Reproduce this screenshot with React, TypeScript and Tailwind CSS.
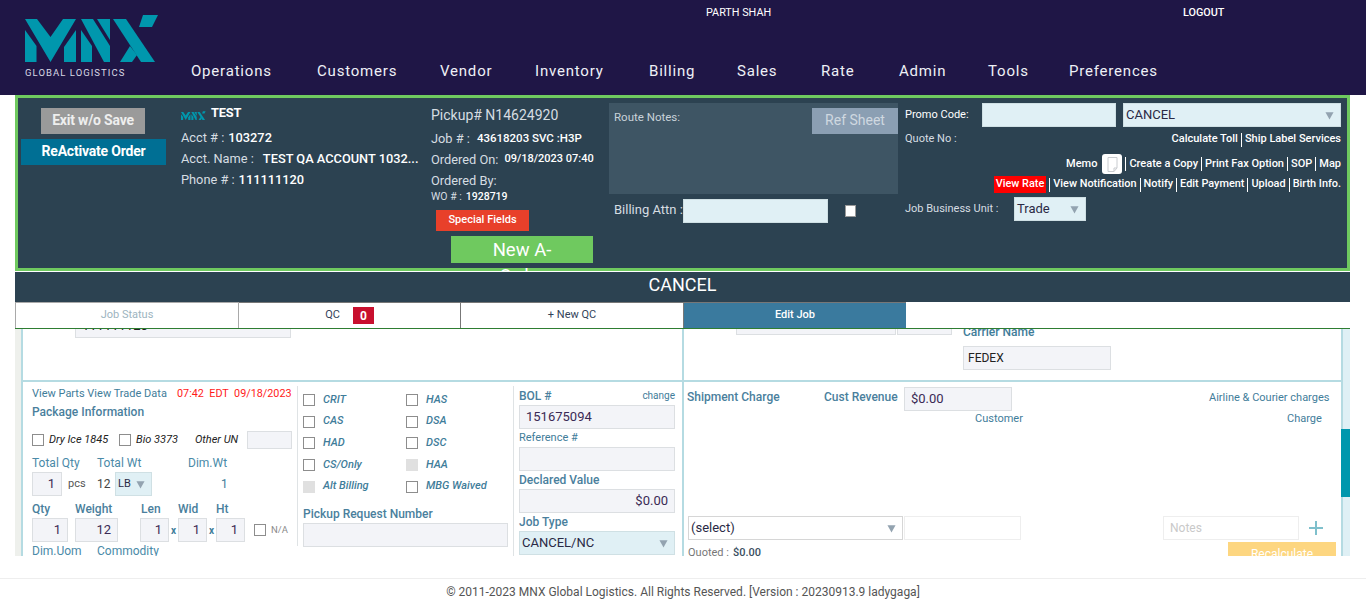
const navItems = [
  { label: "Operations", w: "w-[126px]" },
  { label: "Customers", w: "w-[123px]" },
  { label: "Vendor", w: "w-[95px]" },
  { label: "Inventory", w: "w-[114px]" },
  { label: "Billing", w: "w-[88px]" },
  { label: "Sales", w: "w-[84px]" },
  { label: "Rate", w: "w-[78px]" },
  { label: "Admin", w: "w-[89px]" },
  { label: "Tools", w: "w-[81px]" },
  { label: "Preferences", w: "" },
];

function Caret() {
  return (
    <svg width="9" height="9" viewBox="0 0 10 10" className="shrink-0">
      <path d="M0.5 1.5h9L5 9.5z" fill="#93a3b0" />
    </svg>
  );
}

function Logo({ width, height }: { width: number; height: number }) {
  return (
    <svg width={width} height={height} viewBox="25 15 135 50" className="block">
      <g fill="#0097ad">
        <path d="M25 30l11.5 16v16H25z" />
        <path d="M25 19h12l13.5 18L63 19h13L50.500 62z" />
        <path d="M76 30v32H64V47z" />
        <path d="M81 30l11 16v16H81z" />
        <path d="M81 19h12l17 27v16h-6z" />
        <path d="M97 19h13v21z" />
        <path d="M113 19h13l29 43h-14z" />
        <path d="M120 62l10-16 7 9-5 7z" />
        <path d="M143 15h15l-6 12h-13z" />
      </g>
    </svg>
  );
}

function Box({ className = "", children }: { className?: string; children?: React.ReactNode }) {
  return (
    <div className={`flex h-6 items-center border border-[#dcdfe2] bg-[#f3f4f8] px-1.5 text-[13px] font-normal text-[#3a2a55] ${className}`}>
      {children}
    </div>
  );
}

function Sel({ className = "", text }: { className?: string; text: string }) {
  return (
    <div className={`flex h-6 items-center justify-between border border-[#cfe0e4] bg-[#e0f0f5] pl-0.5 pr-1.5 text-[13px] text-[#2a2a45] ${className}`}>
      <span>{text}</span>
      <Caret />
    </div>
  );
}

function Check({ off = false }: { off?: boolean }) {
  return <div className={`h-3 w-3 shrink-0 ${off ? "bg-[#e0e0e0]" : "border border-[#8d8d8d] bg-white"}`} />;
}

function Flag({ label, off }: { label: string; off?: boolean }) {
  return (
    <div className="flex h-[21.7px] items-center gap-2">
      <Check off={off} />
      <span className="text-[11px] font-medium italic text-[#3f7d9a]">{label}</span>
    </div>
  );
}

function Pipe() {
  return <span className="mx-[3px] h-[14px] w-px bg-white" />;
}

export default function App() {
  return (
    <div className="h-[606px] w-[1366px] overflow-hidden bg-white [font-family:Roboto,sans-serif]">
      <header className="h-[95px] bg-[#1f1646] text-white">
        <div className="flex h-[26px] items-center text-[10.8px]">
          <span className="ml-[706px] w-[477px]">PARTH SHAH</span>
          <span className="font-medium">LOGOUT</span>
        </div>
        <div className="flex">
          <div className="ml-[25px] mt-[-11px] w-[166px]">
            <Logo width={135} height={50} />
            <div className="mt-px text-[9.5px] tracking-[1.05px] text-[#d8d8e4]">GLOBAL LOGISTICS</div>
          </div>
          <nav className="mt-[34px] flex text-[15px] tracking-[0.8px] text-[#eef0f6]">
            {navItems.map((item) => (
              <span key={item.label} className={item.w}>{item.label}</span>
            ))}
          </nav>
        </div>
      </header>

      <div className="mx-[15px] w-[1335px]">
        <section className="flex h-[176px] border-[3px] border-[#6fc95f] bg-[#2c4251] text-white">
          <div className="w-[163px] pt-[10px]">
            <div className="ml-[23px] flex h-[26px] w-[104px] items-center justify-center bg-[#9a9a9a] pb-px text-[14px] font-bold tracking-[-0.2px] text-[#eeeeee]">Exit w/o Save</div>
            <div className="ml-[3px] mt-[5px] flex h-[26px] w-[145px] items-center justify-center bg-[#006f94] pb-px text-[14px] font-bold tracking-[-0.2px]">ReActivate Order</div>
          </div>

          <div className="w-[250px] pt-[3px] text-[12.8px]">
            <div className="flex h-6 items-center">
              <div className="mt-[5px] w-[30px]"><Logo width={25} height={10} /></div>
              <span className="text-[12.8px] font-bold tracking-[-0.2px]">TEST</span>
            </div>
            <div className="mt-[2px] flex h-[21px] items-center gap-1 text-[#d6dde2]">Acct # : <b className="font-medium text-white">103272</b></div>
            <div className="flex h-[21px] items-center text-[#d6dde2]">Acct. Name :<b className="ml-[9px] whitespace-nowrap font-medium text-white">TEST QA ACCOUNT 1032...</b></div>
            <div className="flex h-[21px] items-center gap-1 text-[#d6dde2]">Phone # : <b className="font-medium text-white">111111120</b></div>
          </div>

          <div className="w-[178px] pt-[7px] text-[12.8px] text-[#d6dde2]">
            <div className="flex h-5 items-center text-[14px]">Pickup# N14624920</div>
            <div className="mt-[3px] flex h-[21px] items-center">Job # :<b className="ml-[7px] text-[11.5px] font-medium text-white">43618203 SVC :H3P</b></div>
            <div className="flex h-[21px] items-center">Ordered On:<b className="ml-[6px] text-[11px] font-medium text-white">09/18/2023 07:40</b></div>
            <div className="flex h-[21px] items-center">Ordered By:</div>
            <div className="-mt-px flex h-[14px] items-center text-[10.5px]">WO # :<b className="ml-1 font-medium text-white">1928719</b></div>
            <div className="ml-[5px] mt-[6px] flex h-[21px] w-[93px] items-center justify-center bg-[#e8402a] text-[11px] font-medium text-white">Special Fields</div>
            <div className="relative ml-[20px] mt-[5px] h-[27px] w-[142px] bg-[#6fc95f] pt-px text-center text-[18.500px] leading-[26px] text-white">New A-<br />Order</div>
          </div>

          <div className="w-[296px] pt-[5px]">
            <div className="flex h-[91px] w-[289px] items-start justify-between bg-[#3e5564]">
              <span className="ml-[5px] mt-[6px] text-[11.5px] text-[#c8d2d9]">Route Notes:</span>
              <span className="mt-[5px] flex h-[26px] w-[86px] items-center justify-center bg-[#8b9fb3] pb-px text-[14px] text-[#cfd8e0]">Ref Sheet</span>
            </div>
            <div className="mt-[5px] flex h-6 items-center">
              <span className="ml-[5px] w-[69px] pb-[2px] text-[13px] text-[#d6dde2]">Billing Attn :</span>
              <div className="h-6 w-[145px] border border-[#cfe0e4] bg-[#e0f0f5]" />
              <div className="ml-[17px] h-3 w-[11px] border border-[#999] bg-white" />
            </div>
          </div>

          <div className="w-[436px] pt-[5px] text-[11px]">
            <div className="flex h-6 items-center">
              <span className="w-[77px]">Promo Code:</span>
              <div className="h-6 w-[134px] border border-[#cfe0e4] bg-[#e0f0f5]" />
              <Sel className="ml-[7px] w-[218px] text-[12.5px]" text="CANCEL" />
            </div>
            <div className="mt-1 flex h-4 items-center justify-between">
              <span className="text-[#d6dde2]">Quote No :</span>
              <span className="flex items-center pt-px font-medium"><span>Calculate Toll</span><Pipe /><span>Ship Label Services</span></span>
            </div>
            <div className="mt-[7px] flex h-5 items-center justify-end font-medium">
              <span>Memo</span>
              <div className="ml-[5px] flex h-5 w-5 items-center justify-center rounded-[3px] bg-white">
                <svg width="11" height="15" viewBox="0 0 11 15"><path d="M1 .5h9v10.500L7 14.500H1zM7 14.500V11h3" fill="#fff" stroke="#c9ccd0" /></svg>
              </div>
              <Pipe />
              <span>Create a Copy</span><Pipe /><span>Print Fax Option</span><Pipe /><span>SOP</span><Pipe /><span>Map</span>
            </div>
            <div className="mt-[3px] flex h-[15px] items-center justify-end text-[10.9px] font-medium">
              <span className="bg-[#ff0000] px-[2px]">View Rate</span><Pipe />
              <span>View Notification</span><Pipe /><span>Notify</span><Pipe /><span>Edit Payment</span><Pipe /><span>Upload</span><Pipe /><span>Birth Info.</span>
            </div>
            <div className="mt-[5px] flex h-6 items-center">
              <span className="w-[109px] text-[#d6dde2]">Job Business Unit :</span>
              <Sel className="w-[72px] text-[13.500px]" text="Trade" />
            </div>
          </div>
        </section>

        <div className="relative mt-px flex h-[30px] items-center justify-center bg-[#2c4251] pb-1.5 text-[18px] text-white">CANCEL</div>

        <div className="flex h-[27px] border-b border-[#2e7d32] text-[11px] text-[#33435a]">
          <div className="flex w-[224px] items-center justify-center border border-b-0 border-[#a9a9a9] text-[#9db4c0]">Job Status</div>
          <div className="flex w-[222px] items-center justify-center gap-[13px] border-r border-t border-[#777]">
            QC
            <span className="flex h-[17px] w-[21px] items-center justify-center bg-[#c8102e] text-[12px] font-bold text-white">0</span>
          </div>
          <div className="flex w-[223px] items-center justify-center border-r border-t border-[#777]">+ New QC</div>
          <div className="flex w-[222px] items-center justify-center border-t border-[#777] bg-[#3a7a9e] font-medium text-white">Edit Job</div>
        </div>

        <div className="relative flex h-[227px] overflow-hidden">
          <div className="w-[6px] shrink-0 bg-[#eef0ec]" />
          <div className="w-[1322px] shrink-0 border-x-2 border-[#b5dbe2]">
            <div className="flex h-[53px] border-b-2 border-[#b5dbe2]">
              <div className="w-[661px] border-r-2 border-[#b5dbe2]">
                <Box className="ml-[52px] -mt-[15px] w-[216px] text-[#222]">111111120</Box>
              </div>
              <div className="flex">
                <Box className="ml-[52px] -mt-[18px] w-[160px]" />
                <Box className="ml-px -mt-[18px] w-[55px]" />
                <div className="ml-[11px]">
                  <div className="-mt-[4px] h-[14px] text-[12px] font-medium leading-[14px] text-[#3f7d9a]">Carrier Name</div>
                  <Box className="mt-[7px] w-[148px] !pl-1 !text-[12px] text-[#222]">FEDEX</Box>
                </div>
              </div>
            </div>

            <div className="flex">
              <div className="flex w-[661px] border-r-2 border-[#b5dbe2]">
                <div className="ml-[9px] w-[265px] pt-[6px]">
                  <div className="flex h-3 items-center text-[11px] text-[#3f7d9a]">
                    <span className="w-[145px]">View Parts View Trade Data</span>
                    <span className="text-[10.8px] text-[#ff1a1a]">07:42&nbsp; EDT&nbsp; 09/18/2023</span>
                  </div>
                  <div className="mt-[5px] h-[14px] text-[12px] font-medium leading-[14px] text-[#4a7f9d]">Package Information</div>
                  <div className="mt-[12px] flex h-[18px] items-center text-[11px] italic text-[#222]">
                    <Check /><span className="ml-[5px] w-[70px]">Dry Ice 1845</span>
                    <Check /><span className="ml-[5px] w-[59px]">Bio 3373</span>
                    <span className="w-[52px]">Other UN</span>
                    <div className="h-[18px] w-[45px] border border-[#dcdfe2] bg-[#f3f4f8]" />
                  </div>
                  <div className="mt-[7px] flex h-[14px] items-center text-[12px] leading-[14px] text-[#4a8aa8]">
                    <span className="w-[65px]">Total Qty</span>
                    <span className="w-[91px]">Total Wt</span>
                    <span>Dim.Wt</span>
                  </div>
                  <div className="mt-[2px] flex h-6 items-center text-[12px]">
                    <Box className="w-[30px] justify-end">1</Box>
                    <span className="ml-[6px] w-[29px] text-[11px] text-[#555]">pcs</span>
                    <span className="w-[18px] text-[#444]">12</span>
                    <Sel className="w-[37px] !text-[11px]" text="LB" />
                    <span className="ml-[69px] text-[#3f7d9a]">1</span>
                  </div>
                  <div className="mt-[6px] flex h-[14px] items-center text-[12px] font-medium leading-[14px] text-[#4a7f9d]">
                    <span className="w-[43px]">Qty</span>
                    <span className="w-[66px]">Weight</span>
                    <span className="w-[37px]">Len</span>
                    <span className="w-[38px]">Wid</span>
                    <span>Ht</span>
                  </div>
                  <div className="mt-[2px] flex h-6 items-center">
                    <Box className="w-[36px] justify-end">1</Box>
                    <Box className="ml-[7px] w-[43px] justify-end">12</Box>
                    <Box className="ml-[22px] w-[29px] justify-end">1</Box>
                    <span className="w-[9px] text-center text-[10px] font-bold text-[#3f7d9a]">x</span>
                    <Box className="w-[29px] justify-end">1</Box>
                    <span className="w-[9px] text-center text-[10px] font-bold text-[#3f7d9a]">x</span>
                    <Box className="w-[29px] justify-end">1</Box>
                    <div className="ml-[9px]"><Check /></div>
                    <span className="ml-[5px] text-[9.500px] text-[#8b8b8b]">N/A</span>
                  </div>
                  <div className="mt-[2px] flex h-[14px] items-center text-[12px] text-[#4a8aa8]">
                    <span className="w-[65px]">Dim.Uom</span>
                    <span>Commodity</span>
                  </div>
                </div>

                <div className="mt-[4px] h-[160px] w-[216px] border-l border-[#dfe3e5] pl-[5px] pt-[3px]">
                  <div className="flex">
                    <div className="w-[103px]">
                      <Flag label="CRIT" />
                      <Flag label="CAS" />
                      <Flag label="HAD" />
                      <Flag label="CS/Only" />
                      <Flag label="Alt Billing" off />
                    </div>
                    <div>
                      <Flag label="HAS" />
                      <Flag label="DSA" />
                      <Flag label="DSC" />
                      <Flag label="HAA" off />
                      <Flag label="MBG Waived" />
                    </div>
                  </div>
                  <div className="mt-[9.500px] h-[14px] text-[12px] font-medium leading-[14px] text-[#4a7f9d]">Pickup Request Number</div>
                  <Box className="mt-[2px] w-[205px]" />
                </div>

                <div className="mt-[4px] h-[170px] border-l border-[#dfe3e5] pl-[5px]">
                  <div className="flex h-[16px] w-[156px] items-center justify-between pt-[3px] text-[12px] font-medium text-[#4a7f9d]">
                    <span>BOL #</span>
                    <span className="text-[10px] font-normal text-[#3f7d9a]">change</span>
                  </div>
                  <Box className="mt-[3px] w-[156px]">151675094</Box>
                  <div className="mt-px h-4 text-[11px] leading-[16px] text-[#3f7d9a]">Reference #</div>
                  <Box className="mt-px w-[156px]" />
                  <div className="mt-px h-4 text-[12px] font-medium leading-[16px] text-[#4a7f9d]">Declared Value</div>
                  <Box className="mt-px w-[156px] justify-end">$0.00</Box>
                  <div className="mt-px h-4 text-[12px] font-medium leading-[16px] text-[#4a7f9d]">Job Type</div>
                  <Sel className="mt-px w-[156px]" text="CANCEL/NC" />
                </div>
              </div>

              <div className="w-[657px] pl-[3px]">
                <div className="mt-[5px] flex h-6 items-center text-[12px] font-medium text-[#4a7f9d]">
                  <span className="w-[137px] pb-[5px]">Shipment Charge</span>
                  <span className="w-[80px] pb-[5px]">Cust Revenue</span>
                  <Box className="w-[108px]">$0.00</Box>
                  <span className="ml-[197px] pb-px text-[11px] font-normal text-[#3f7d9a]">Airline &amp; Courier charges</span>
                </div>
                <div className="mt-px flex h-[14px] items-center text-[11px] text-[#3f7d9a]">
                  <span className="ml-[288px] w-[299px]">Customer</span>
                  <span className="ml-[13px]">Charge</span>
                </div>
                <div className="mt-[90px] flex h-6 items-center">
                  <div className="ml-px flex h-6 w-[215px] items-center justify-between border border-[#d6d6d6] pl-0.5 pr-1.5 text-[13px] text-[#2a2a45]">
                    <span>(select)</span>
                    <Caret />
                  </div>
                  <div className="ml-px h-6 w-[117px] border border-[#eeeeee]" />
                  <div className="ml-[142px] flex h-6 w-[136px] items-center border border-[#eeeeee] px-1.5 text-[12px] text-[#c9c9c9]">Notes</div>
                  <svg width="16" height="16" viewBox="0 0 16 16" className="ml-[9px]"><path d="M8 1v14M1 8h14" stroke="#7fc0cc" strokeWidth="2" /></svg>
                </div>
                <div className="flex items-start">
                  <div className="ml-px mt-[5px] flex w-[540px] gap-1 text-[11px] text-[#777]">
                    <span>Quoted :</span>
                    <span className="font-medium text-[#3a4f5f]">$0.00</span>
                  </div>
                  <span className="mt-[2px] flex h-6 w-[108px] items-center justify-center bg-[#fdd680] text-[12px] text-white">Recalculate</span>
                </div>
              </div>
            </div>
          </div>
          <div className="w-[7px] shrink-0 bg-[#dff0f5]" />
          <div className="absolute left-[1326px] top-[100px] h-[68px] w-[12px] bg-[#0097ad]" />
        </div>
      </div>

      <footer className="mt-[22px] flex h-[26px] items-center justify-center border-t border-[#eeeeee] text-[12px] text-[#555]">
        © 2011-2023 MNX Global Logistics. All Rights Reserved. [Version : 20230913.9 ladygaga]
      </footer>
    </div>
  );
}
